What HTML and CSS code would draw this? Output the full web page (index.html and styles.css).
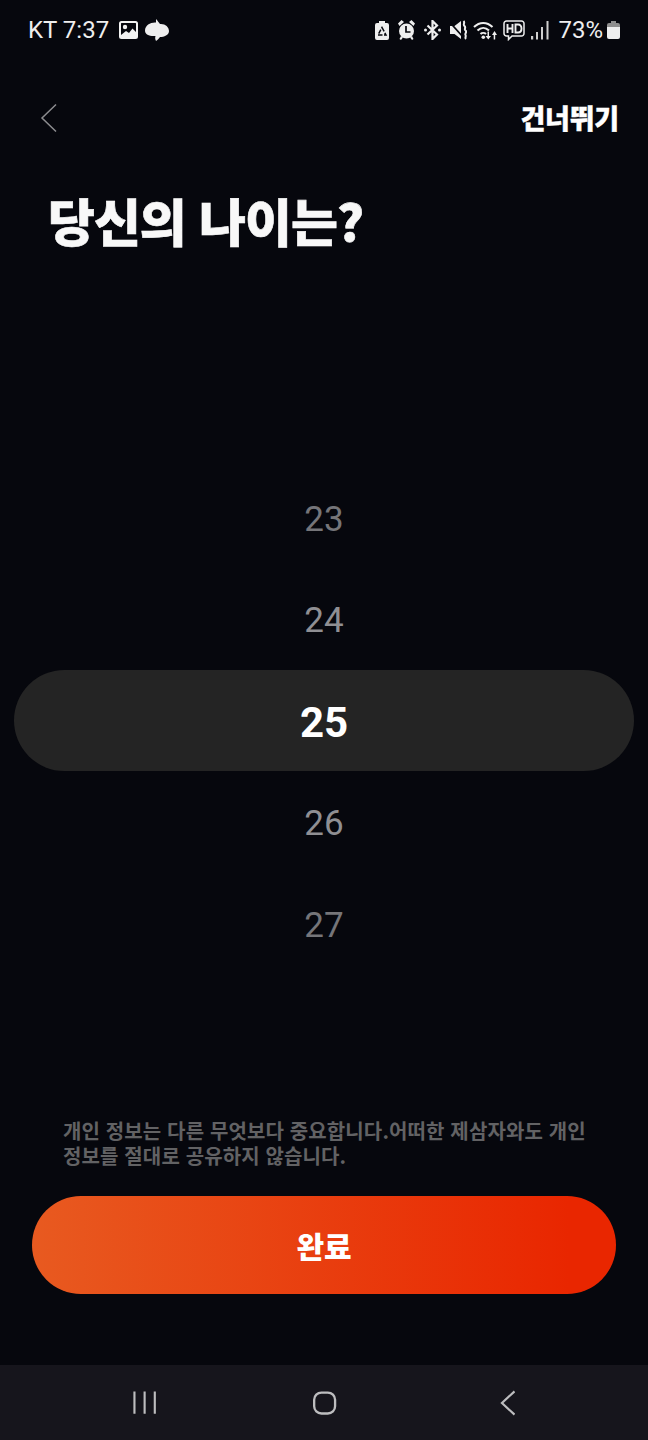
FILE: index.html
```html
<!DOCTYPE html>
<html lang="ko">
<head>
    <meta charset="UTF-8">
    <meta name="viewport" content="width=device-width, initial-scale=1.0">
    <title>나이 선택</title>
    <link rel="stylesheet" href="styles.css">
</head>
<body>
    <div class="screen">
        <div class="status-bar">
            <div class="status-left">
                <span class="status-text">KT 7:37</span>
                <svg class="photo" width="19" height="18" viewBox="0 0 19 18"><rect x="1" y="1" width="17" height="16" rx="1.500" fill="none" stroke="#f2f2f2" stroke-width="2"/><circle cx="6" cy="6" r="2.200" fill="#f2f2f2"/><path fill="#f2f2f2" d="M2 16v-2l5-4 3 2 3.500-4.500L17 11v5z"/></svg>
                <svg width="24" height="22" viewBox="0 0 24 22"><path fill="#eeeeee" d="M11 0C13 2 14 4 15 5 20 4.500 24 8 24 12 24 16 19 18 15 18 14 19 13 21 11 22 10 20 10 18.500 10.500 17 5 17.500 0 16 0 11.500 0 6 6 3 11 3.500 11 2.500 11 1 11 0z"/></svg>
            </div>
            <div class="status-right">
                <svg width="14" height="19" viewBox="0 0 14 19"><path fill="#eeeeee" d="M4 0h6v2h2a2 2 0 0 1 2 2v13a2 2 0 0 1-2 2H2a2 2 0 0 1-2-2V4a2 2 0 0 1 2-2h2z"/><path fill="none" stroke="#06070d" stroke-width="1.500" stroke-dasharray="4.500 1.500" d="M7 6.500 11 14H3z"/></svg>
                <svg width="17" height="20" viewBox="0 0 17 20"><circle cx="8.500" cy="11" r="7.500" fill="#eeeeee"/><path fill="none" stroke="#06070d" stroke-width="1.700" d="M8 6v6h4.500"/><path fill="#eeeeee" d="M3.500 0 6 2 1.500 6 0 3.500zM13.500 0 17 3.500 15.500 6 11 2zM3 16l2 1.500L3 20 1.500 19zM14 16l1.500 3-1.500 1-2-2.500z"/></svg>
                <svg width="17" height="20" viewBox="0 0 17 20"><path fill="none" stroke="#eeeeee" stroke-width="2.200" d="M3.500 5.500 13 14.500 8.500 19V1L13 5.500 3.500 14.500"/><circle cx="1.500" cy="10" r="1.500" fill="#eeeeee"/><circle cx="15.500" cy="10" r="1.500" fill="#eeeeee"/></svg>
                <svg width="17" height="20" viewBox="0 0 17 20"><path fill="#eeeeee" d="M0 6h4.500L11 1v18l-6.500-5H0z"/><path fill="none" stroke="#06070d" stroke-width="1.800" d="M0 2.500 13 17"/><path fill="none" stroke="#eeeeee" stroke-width="2" d="M13.500 1c2 2-1 3 1 5s-1 3 1 4.500-1 3 0 4.500-1 2.500 .5 4"/></svg>
                <svg class="tight" width="24" height="20" viewBox="0 0 24 20"><g fill="none" stroke="#eeeeee" stroke-width="2"><path d="M1 7c5.500-5.500 13-5.500 18.500 0"/><path d="M4.500 10.500c3.500-3.500 8-3.500 11.500 0"/><path d="M7.500 14c1.500-1.500 4-1.500 5.500 0"/></g><circle cx="10.300" cy="17.300" r="1.800" fill="#eeeeee"/><path fill="#eeeeee" d="M14.500 11.500H16V16h2l-2.700 3.500L12.500 16h2zM21.500 11l2.500 4h-1.800v4.500h-1.500V15H19z"/></svg>
                <svg class="tight" width="22" height="21" viewBox="0 0 22 21"><path fill="none" stroke="#eeeeee" stroke-width="1.500" d="M3.500 1h15a2.500 2.500 0 0 1 2.500 2.500v10a2.500 2.500 0 0 1-2.500 2.500H9l-3.500 3.500V16h-2A2.500 2.500 0 0 1 1 13.500v-10A2.500 2.500 0 0 1 3.500 1z"/><path fill="none" stroke="#eeeeee" stroke-width="1.900" d="M4.500 4v9M9.500 4v9M4.500 8.500h5M12.500 4.500v8h2.500c2.200 0 3.500-1.500 3.500-4s-1.300-4-3.500-4z"/></svg>
                <svg class="tight" width="18" height="19" viewBox="0 0 18 19"><path fill="#cfcfcf" d="M0 15h2.200v3.500H0zM5 11h2v7.500H5zM10 6h2v12.500h-2zM15.500 0h2v18.500h-2z"/></svg>
                <span class="status-text">73%</span>
                <svg class="tighter" width="13" height="18" viewBox="0 0 13 18"><path fill="#8e8e8e" d="M4 0h5v2h2a2 2 0 0 1 2 2v2H0V4a2 2 0 0 1 2-2h2z"/><path fill="#eeeeee" d="M0 6h13v10a2 2 0 0 1-2 2H2a2 2 0 0 1-2-2z"/></svg>
            </div>
        </div>

        <div class="top-row">
            <svg width="18" height="30" viewBox="0 0 18 30"><path fill="none" stroke="#8c8c8f" stroke-width="1.500" d="M16 1.500 2 15l14 13.500"/></svg>
            <a class="skip">건너뛰기</a>
        </div>

        <h1>당신의 나이는?</h1>

        <div class="picker">
            <div class="age age-far">23</div>
            <div class="age">24</div>
            <div class="age age-selected">25</div>
            <div class="age">26</div>
            <div class="age age-far">27</div>
        </div>

        <p class="note">개인 정보는 다른 무엇보다 중요합니다.어떠한 제삼자와도 개인 정보를 절대로 공유하지 않습니다.</p>

        <button class="done">완료</button>

        <div class="nav-bar">
            <svg width="24" height="24" viewBox="0 0 24 24"><path fill="none" stroke="#bdbdbf" stroke-width="2.200" d="M1.500 0v23M12 0v23M22.500 0v23"/></svg>
            <svg class="nav-home" width="24" height="24" viewBox="0 0 24 24"><rect x="1.200" y="1.200" width="21.600" height="21.600" rx="7.500" fill="none" stroke="#bdbdbf" stroke-width="2.400"/></svg>
            <svg width="16" height="26" viewBox="0 0 16 26"><path fill="none" stroke="#bdbdbf" stroke-width="2.200" d="M15 1 2 13l13 12"/></svg>
        </div>
    </div>
</body>
</html>
```

FILE: styles.css
```css
/* General Page Styling */
body {
    margin: 0;
    padding: 0;
    background: #06070d;
    color: #ffffff;
    font-family: 'Noto Sans CJK KR', 'Roboto', sans-serif;
}

.screen {
    width: 648px;
    height: 1440px;
    display: flex;
    flex-direction: column;
    overflow: hidden;
}

/* Status Bar */
.status-bar {
    height: 60px;
    padding: 0 28px;
    display: flex;
    justify-content: space-between;
    align-items: center;
    box-sizing: border-box;
}

.status-left,
.status-right {
    display: flex;
    align-items: center;
}

.status-left {
    gap: 7px;
}

.status-right {
    gap: 9px;
}

.status-text {
    font-family: 'Roboto', sans-serif;
    font-size: 24px;
    color: #eeeeee;
}

.photo {
    margin-left: 3px;
}

.tight {
    margin-left: -3px;
}

.tighter {
    margin-left: -5px;
}

/* Top Row */
.top-row {
    height: 72px;
    margin-top: 21px;
    padding: 0 29px 0 40px;
    display: flex;
    justify-content: space-between;
    align-items: center;
}

.top-row svg {
    margin-top: 2px;
}

.skip {
    font-size: 27px;
    font-weight: 900;
    letter-spacing: -0.2px;
    -webkit-text-stroke: 0.4px #ffffff;
    color: #ffffff;
}

h1 {
    margin: 29px 0 0 48px;
    font-size: 51px;
    line-height: 76px;
    font-weight: 900;
    letter-spacing: -1px;
    -webkit-text-stroke: 0.6px #f8f8f8;
    color: #f8f8f8;
}

/* Age Picker */
.picker {
    margin-top: 209px;
}

.age {
    height: 101.500px;
    padding-top: 3px;
    box-sizing: border-box;
    display: flex;
    align-items: center;
    justify-content: center;
    font-family: 'Roboto', sans-serif;
    font-size: 35px;
    color: #8f8f93;
}

.age-far {
    color: #757579;
}

.age-selected {
    height: 101px;
    margin: 0 14px 0.500px;
    border-radius: 51px;
    background: #242424;
    font-size: 42px;
    font-weight: 700;
    color: #ffffff;
}

/* Bottom Section */
.note {
    margin: 143px 60px 0 63px;
    font-size: 20px;
    line-height: 25px;
    font-weight: 700;
    letter-spacing: 0.13px;
    color: #626264;
}

.done {
    margin: 28.500px 32px 0;
    height: 98px;
    padding-bottom: 2px;
    border: none;
    border-radius: 49px;
    background: linear-gradient(90deg, #e85a20, #e92600 92%);
    color: #ffffff;
    font-family: inherit;
    font-size: 30px;
    font-weight: 900;
}

.nav-bar {
    margin-top: auto;
    height: 75px;
    padding: 0 133px;
    background: #16151c;
    display: flex;
    align-items: center;
}

.nav-home {
    margin: 0 163px 0 157px;
}
```
